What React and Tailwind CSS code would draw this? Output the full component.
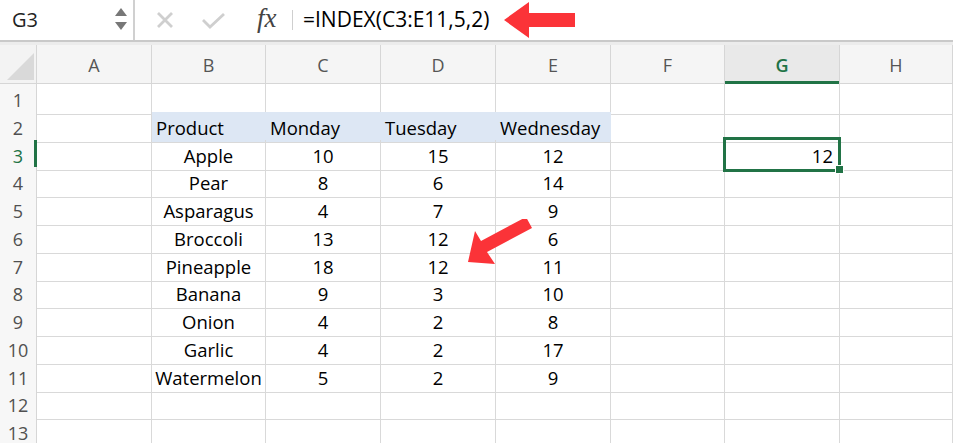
import React from "react";

const cols = ["A", "B", "C", "D", "E", "F", "G", "H"];
const data = [
  ["Apple", "10", "15", "12"],
  ["Pear", "8", "6", "14"],
  ["Asparagus", "4", "7", "9"],
  ["Broccoli", "13", "12", "6"],
  ["Pineapple", "18", "12", "11"],
  ["Banana", "9", "3", "10"],
  ["Onion", "4", "2", "8"],
  ["Garlic", "4", "2", "17"],
  ["Watermelon", "5", "2", "9"],
];

const gridCols = "grid grid-cols-[37px_115px_114px_115px_115px_115px_114px_115px_1fr]";

function RowHeader({ n, active }) {
  return (
    <div
      className={
        "relative flex items-center justify-center border-r border-b border-[#d6d6d6] bg-[#f7f7f7] pt-[3px] text-[18px] " +
        (active ? "text-[#217346]" : "text-[#505050]")
      }
    >
      {n}
      {active && <div className="absolute right-[-1px] top-0 bottom-0 w-[3px] bg-[#217346]" />}
    </div>
  );
}

function Cell({ children, className = "" }) {
  return (
    <div className={"relative flex items-center border-r border-b border-[#d9d9d9] pt-[2px] text-[18.5px] text-black " + className}>
      {children}
    </div>
  );
}

export default function App() {
  const rows = [];
  for (let r = 1; r <= 13; r++) {
    const cells = [];
    for (let c = 0; c < 8; c++) {
      let content = null;
      let cls = "";
      if (r === 2 && c >= 1 && c <= 4) {
        content = ["Product", "Monday", "Tuesday", "Wednesday"][c - 1];
        cls = "bg-[#dde7f4] border-r-[#dde7f4] pl-[4px]";
      } else if (r >= 3 && r <= 11 && c >= 1 && c <= 4) {
        content = data[r - 3][c - 1];
        cls = "justify-center";
      } else if (r === 3 && c === 6) {
        content = (
          <>
            <span className="ml-auto pr-[6px]">12</span>
            <div className="absolute left-[-2px] top-[-3px] right-[-2px] bottom-[-2px] border-[3px] border-[#217346]" />
            <div className="absolute right-[-5px] bottom-[-4px] w-[9px] h-[9px] bg-[#217346] border border-white" />
          </>
        );
        cls = "z-10";
      }
      cells.push(
        <Cell key={c} className={cls}>
          {content}
        </Cell>
      );
    }
    rows.push(
      <div key={r} className={gridCols + " h-[27.75px]"}>
        <RowHeader n={r} active={r === 3} />
        {cells}
      </div>
    );
  }

  return (
    <div className="w-[953px] h-[443px] overflow-hidden bg-white" style={{ fontFamily: '"Open Sans", "Noto Sans", sans-serif' }}>
      {/* Formula bar */}
      <div className="flex h-[40px] items-center bg-white">
        <div className="relative flex h-full w-[135px] items-center border-r-2 border-[#d0d0d0] pl-[12px] text-[20px] text-[#222]">
          G3
          <svg className="absolute left-[114px] top-[7px]" width="14" height="24" viewBox="0 0 14 24">
            <polygon points="7,1 13,9 1,9" fill="#777" />
            <polygon points="7,23 13,15 1,15" fill="#777" />
          </svg>
        </div>
        <div className="ml-[21px] flex items-center">
          <svg width="18" height="18" viewBox="0 0 18 18">
            <path d="M2 2 L16 16 M16 2 L2 16" stroke="#cfcfcf" strokeWidth="2.8" />
          </svg>
          <svg className="ml-[27px]" width="25" height="18" viewBox="0 0 25 18">
            <path d="M2 9 L9 16 L23 3" stroke="#cfcfcf" strokeWidth="2.8" fill="none" />
          </svg>
          <span
            className="ml-[31px] mt-[-3px] w-[24px] text-[27px] italic leading-none text-[#444]"
            style={{ fontFamily: '"Liberation Serif", serif' }}
          >
            fx
          </span>
          <div className="ml-[11px] h-[20px] w-[1px] bg-[#cfcfcf]" />
          <span className="ml-[10px] text-[21px] text-black">=INDEX(C3:E11,5,2)</span>
          <svg className="ml-[15px]" width="72" height="36" viewBox="0 0 72 36">
            <polygon points="0,18 25,0 25,11 71,11 71,25 25,25 25,36" fill="#fb3338" />
          </svg>
        </div>
      </div>
      <div className="h-[2px] bg-[#c9c9c9]" />
      <div className="h-[3px] bg-[#ececec]" />

      {/* Column headers */}
      <div className={gridCols + " h-[39px]"}>
        <div className="relative border-r border-b border-[#d6d6d6] bg-[#f3f3f3]">
          <svg className="absolute left-[7px] top-[8px]" width="27" height="27" viewBox="0 0 27 27">
            <polygon points="27,0 27,27 0,27" fill="#d9d9d9" />
          </svg>
        </div>
        {cols.map((c) => (
          <div
            key={c}
            className={
              "relative flex items-center justify-center border-r border-b border-[#d6d6d6] pt-[2px] text-[18px] " +
              (c === "G" ? "bg-[#e9e9e9] text-[#217346] font-semibold" : "bg-[#f5f5f5] text-[#555]")
            }
          >
            {c}
            {c === "G" && <div className="absolute left-0 right-0 bottom-[-1px] h-[3px] bg-[#217346]" />}
          </div>
        ))}
      </div>

      {/* Rows */}
      <div className="relative">
        {rows}
        <svg className="absolute left-[462px] top-[135px]" width="76" height="50" viewBox="0 0 76 50">
          <polygon points="6,43 13,12 19,22 64,-2 70,9 25,33 33,45" fill="#fb3338" />
        </svg>
      </div>
    </div>
  );
}
